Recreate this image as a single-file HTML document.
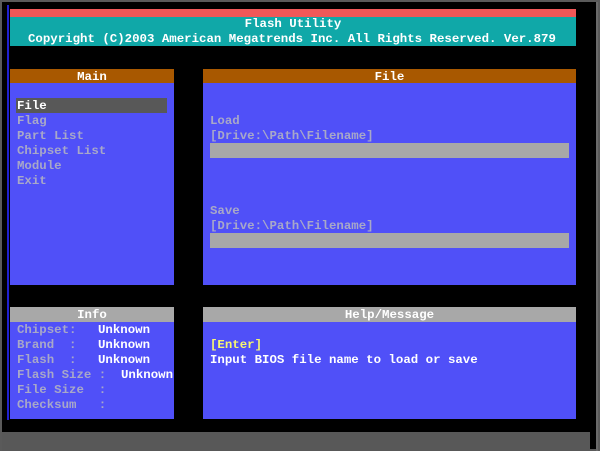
<!DOCTYPE html>
<html><head><style>
body{margin:0;width:600px;height:451px;background:#000;position:relative;overflow:hidden;font-family:"Liberation Mono",monospace;font-size:12.4px;font-weight:bold}
div{position:absolute}
.t{height:15px;line-height:15px;white-space:pre;margin-top:1px}
.g{color:#a8a8c8}
.w{color:#fff}
.blue{background:#5050f8}
</style></head><body>
<div style="left:0;top:0;width:600px;height:451px;border:2px solid #5a5a5a;box-sizing:border-box"></div>
<div style="left:7px;top:5px;width:2px;height:415px;background:#2020d0"></div>
<div style="left:10px;top:9px;width:566px;height:8px;background:#f05858"></div>
<div style="left:10px;top:17px;width:566px;height:29px;background:#10a8a8"></div>
<div class="t w" style="left:10px;top:16px;width:566px;text-align:center">Flash Utility</div>
<div class="t w" style="left:28px;top:31px">Copyright (C)2003 American Megatrends Inc. All Rights Reserved. Ver.879</div>

<div class="blue" style="left:10px;top:69px;width:164px;height:216px"></div>
<div style="left:10px;top:69px;width:164px;height:14px;background:#a85800"></div>
<div class="t w" style="left:10px;top:69px;width:164px;text-align:center">Main</div>
<div style="left:16px;top:98px;width:151px;height:15px;background:#585858"></div>
<div class="t w" style="left:17px;top:98px">File</div>
<div class="t g" style="left:17px;top:113px">Flag</div>
<div class="t g" style="left:17px;top:128px">Part List</div>
<div class="t g" style="left:17px;top:143px">Chipset List</div>
<div class="t g" style="left:17px;top:158px">Module</div>
<div class="t g" style="left:17px;top:173px">Exit</div>

<div class="blue" style="left:203px;top:69px;width:373px;height:216px"></div>
<div style="left:203px;top:69px;width:373px;height:14px;background:#a85800"></div>
<div class="t w" style="left:203px;top:69px;width:373px;text-align:center">File</div>
<div class="t g" style="left:210px;top:113px">Load</div>
<div class="t g" style="left:210px;top:128px">[Drive:\Path\Filename]</div>
<div style="left:210px;top:143px;width:359px;height:15px;background:#a8a8a8"></div>
<div class="t g" style="left:210px;top:203px">Save</div>
<div class="t g" style="left:210px;top:218px">[Drive:\Path\Filename]</div>
<div style="left:210px;top:233px;width:359px;height:15px;background:#a8a8a8"></div>

<div class="blue" style="left:10px;top:307px;width:164px;height:112px"></div>
<div style="left:10px;top:307px;width:164px;height:15px;background:#a8a8a8"></div>
<div class="t w" style="left:10px;top:307px;width:164px;text-align:center">Info</div>
<div class="t g" style="left:17px;top:322px">Chipset:</div><div class="t w" style="left:98px;top:322px">Unknown</div>
<div class="t g" style="left:17px;top:337px">Brand  :</div><div class="t w" style="left:98px;top:337px">Unknown</div>
<div class="t g" style="left:17px;top:352px">Flash  :</div><div class="t w" style="left:98px;top:352px">Unknown</div>
<div class="t g" style="left:17px;top:367px">Flash Size :</div><div class="t w" style="left:121px;top:367px">Unknown</div>
<div class="t g" style="left:17px;top:382px">File Size  :</div>
<div class="t g" style="left:17px;top:397px">Checksum   :</div>

<div class="blue" style="left:203px;top:307px;width:373px;height:112px"></div>
<div style="left:203px;top:307px;width:373px;height:15px;background:#a8a8a8"></div>
<div class="t w" style="left:203px;top:307px;width:373px;text-align:center">Help/Message</div>
<div class="t" style="left:210px;top:337px;color:#f8f870">[Enter]</div>
<div class="t w" style="left:210px;top:352px">Input BIOS file name to load or save</div>

<div style="left:2px;top:432px;width:588px;height:19px;background:#585858"></div>
<div style="left:596px;top:2px;width:2px;height:449px;background:#6a6a6a"></div>
</body></html>
